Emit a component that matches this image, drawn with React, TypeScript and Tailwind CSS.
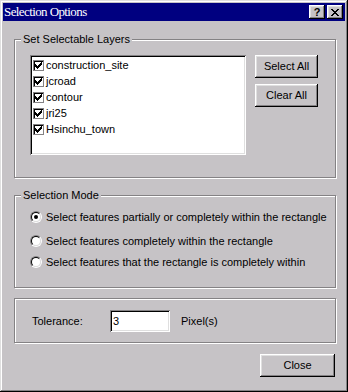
import React from "react";

const btnBevel =
  "shadow-[inset_-1px_-1px_0_#000,inset_1px_1px_0_#fff,inset_-2px_-2px_0_#848284,inset_2px_2px_0_#dfdfdf]";
const fieldBevel =
  "shadow-[inset_1px_1px_0_#848284,inset_-1px_-1px_0_#fff,inset_2px_2px_0_#000,inset_-2px_-2px_0_#dfdfdf]";

function Group({
  label,
  className,
  children,
}: {
  label?: string;
  className: string;
  children: React.ReactNode;
}) {
  return (
    <div
      className={`relative w-[322px] border border-[#848284] shadow-[1px_1px_0_#fff,inset_1px_1px_0_#fff] ${className}`}
    >
      {label && (
        <div className="absolute left-[6px] top-[-8px] bg-[#c6c3c6] px-[2px] text-[11px] leading-[14px] text-black">
          {label}
        </div>
      )}
      {children}
    </div>
  );
}

function CheckItem({ name }: { name: string }) {
  return (
    <div className="flex h-[16px] items-center pl-[1px]">
      <div className="flex h-[11px] w-[11px] items-center justify-center border border-[#848284] bg-white shadow-[inset_1px_1px_0_#000]">
        <svg width="7" height="7" viewBox="0 0 7 7" shapeRendering="crispEdges">
          <path d="M0 2h1v3h-1zM1 3h1v3h-1zM2 4h1v3h-1zM3 3h1v3h-1zM4 2h1v3h-1zM5 1h1v3h-1zM6 0h1v3h-1z" fill="#000" />
        </svg>
      </div>
      <span className="ml-[2px] text-[11px] leading-[14px] text-black">{name}</span>
    </div>
  );
}

function Radio({ checked, label, className }: { checked?: boolean; label: string; className?: string }) {
  return (
    <div className={`flex h-[16px] items-center ${className ?? ""}`}>
      <div className="h-[12px] w-[12px] rounded-full border border-t-[#848284] border-l-[#848284] border-b-white border-r-white">
        <div className="flex h-[10px] w-[10px] items-center justify-center rounded-full border border-t-black border-l-black border-b-[#dfdfdf] border-r-[#dfdfdf] bg-white">
          {checked && <div className="h-[4px] w-[4px] rounded-full bg-black" />}
        </div>
      </div>
      <span className="ml-[4px] text-[11px] leading-[14px] text-black">{label}</span>
    </div>
  );
}

function Button({ label, className }: { label: string; className: string }) {
  return (
    <div
      className={`flex h-[23px] items-center justify-center bg-[#c6c3c6] text-[11px] text-black ${btnBevel} ${className}`}
    >
      {label}
    </div>
  );
}

export default function App() {
  const layers = ["construction_site", "jcroad", "contour", "jri25", "Hsinchu_town"];
  return (
    <div
      className="flex h-[392px] w-[348px] flex-col bg-[#c6c3c6] p-[3px] font-['Liberation_Sans',Arial,sans-serif] shadow-[inset_-1px_-1px_0_#000,inset_1px_1px_0_#dfdfdf,inset_-2px_-2px_0_#848284,inset_2px_2px_0_#fff]"
    >
      {/* Title bar */}
      <div className="flex h-[18px] items-center justify-between bg-[#000080] pl-[1px] pr-[2px]">
        <span className="font-['Liberation_Serif',serif] text-[13px] leading-[16px] tracking-[-0.6px] text-white">
          Selection Options
        </span>
        <div className="flex gap-[2px]">
          <div className={`flex h-[14px] w-[16px] items-center justify-center bg-[#c6c3c6] ${btnBevel}`}>
            <span className="text-[11px] font-bold leading-[11px] text-black">?</span>
          </div>
          <div className={`flex h-[14px] w-[16px] items-center justify-center bg-[#c6c3c6] ${btnBevel}`}>
            <svg width="8" height="7" viewBox="0 0 8 7" shapeRendering="crispEdges">
              <path
                d="M0 0h2v1h-2zM6 0h2v1h-2zM1 1h2v1h-2zM5 1h2v1h-2zM2 2h4v1h-4zM3 3h2v1h-2zM2 4h4v1h-4zM1 5h2v1h-2zM5 5h2v1h-2zM0 6h2v1h-2zM6 6h2v1h-2z"
                fill="#000"
              />
            </svg>
          </div>
        </div>
      </div>

      {/* Content */}
      <div className="flex flex-col pl-[11px] pt-[18px]">
        <Group label="Set Selectable Layers" className="flex h-[139px] pl-[15px] pt-[15px]">
          <div className={`h-[100px] w-[216px] bg-white p-[2px] ${fieldBevel}`}>
            {layers.map((l) => (
              <CheckItem key={l} name={l} />
            ))}
          </div>
          <div className="ml-[9px] flex flex-col gap-[6px]">
            <Button label="Select All" className="w-[63px]" />
            <Button label="Clear All" className="w-[63px]" />
          </div>
        </Group>

        <Group label="Selection Mode" className="mt-[17px] flex h-[93px] flex-col pl-[15px] pt-[13px]">
          <Radio checked label="Select features partially or completely within the rectangle" />
          <Radio className="mt-[8px]" label="Select features completely within the rectangle" />
          <Radio className="mt-[5px]" label="Select features that the rectangle is completely within" />
        </Group>

        <Group className="mt-[10px] flex h-[45px] items-start pl-[17px] pt-[11px]">
          <span className="mt-[4px] w-[78px] text-[11px] leading-[14px] text-black">Tolerance:</span>
          <div className={`flex h-[22px] w-[60px] items-center bg-white pl-[3px] text-[11px] text-black ${fieldBevel}`}>
            3
          </div>
          <span className="ml-[11px] mt-[4px] text-[11px] leading-[14px] text-black">Pixel(s)</span>
        </Group>

        <div className="mt-[11px] flex w-[322px] justify-end pr-[1px]">
          <Button label="Close" className="w-[75px]" />
        </div>
      </div>
    </div>
  );
}
